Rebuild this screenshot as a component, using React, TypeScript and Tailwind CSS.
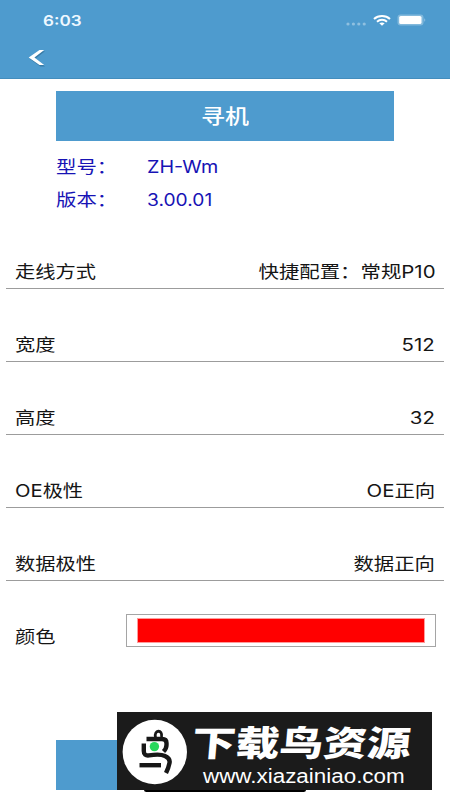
import React from 'react';

const settings = [
  { label: '走线方式', value: '快捷配置：常规P10' },
  { label: '宽度', value: '512' },
  { label: '高度', value: '32' },
  { label: 'OE极性', value: 'OE正向' },
  { label: '数据极性', value: '数据正向' },
];

const StatusBar: React.FC = () => (
  <div className="flex h-10 items-center justify-between pl-[43px] pr-6 text-white">
    <span className="mt-px origin-left scale-x-[1.18] text-[14.5px] font-semibold leading-5 text-[#eef8ff]">6:03</span>
    <div className="flex items-center">
      {/* No signal dots */}
      <svg className="mr-[6px] mt-2" width="21" height="4" viewBox="0 0 21 4" fill="#8fc0e0">
        <circle cx="2" cy="2" r="1.6" />
        <circle cx="7.4" cy="2" r="1.6" />
        <circle cx="12.8" cy="2" r="1.6" />
        <circle cx="18.2" cy="2" r="1.6" />
      </svg>
      <svg className="mr-[6px]" width="18" height="11" viewBox="0 0 18 11" fill="none" stroke="white" strokeWidth="2">
        <path d="M1 4 C5.3 .1 12.7 .1 17 4" />
        <path d="M4 6.7 C6.8 4.2 11.2 4.2 14 6.7" />
        <path d="M6.3 8.3 Q9 6.5 11.7 8.3 L9 10.8Z" fill="white" stroke="none" />
      </svg>
      <svg width="29" height="12" viewBox="0 0 29 12">
        <rect x=".5" y=".5" width="26" height="11" rx="3" fill="#82b9dc" />
        <rect x="2.2" y="2" width="22.3" height="8" rx="1.6" fill="white" />
        <path d="M27.5 4 Q29 6 27.5 8Z" fill="#b4d6ec" />
      </svg>
    </div>
  </div>
);

const Header: React.FC = () => (
  <header className="h-[79px] border-b border-[#438dbd] bg-[#4e9bce]">
    <StatusBar />
    <div className="pl-7 pt-[9px]">
      <svg width="18" height="19" viewBox="0 0 18 19">
        <path d="M12.3 2.3 H17 L7.2 9.8 L17 17.4 H12.3 L1.5 9.8Z" fill="#397ba6" />
        <path d="M11.5 1 H16.2 L6.4 8.5 L16.2 16.1 H11.5 L.7 8.5Z" fill="white" />
      </svg>
    </div>
  </header>
);

const Watermark: React.FC = () => (
  <div className="absolute left-[117px] top-[712px] flex h-[78px] w-[315px] bg-[#1b1b1b] text-white">
    <svg className="ml-[5px] mt-[7px] shrink-0" width="66" height="66" viewBox="0 0 66 66">
      <circle cx="32.8" cy="33" r="32.2" fill="white" />
      <g fill="none" stroke="#171717" strokeWidth="4.4">
        <path d="M33.5 18.5 C31.5 10.5 41 10 39.5 18" strokeWidth="2.8" />
        <path d="M24.5 20 H40 Q44.5 20 44.5 24 V26 Q44.5 29.5 41.5 32.5" />
        <path d="M21.8 24.5 V32 Q21.8 37 27 36.4 Q38 34.5 43 37 Q48.5 39.5 47.5 44 Q46.5 49 44 54" />
        <path d="M17.5 46.2 H39" />
      </g>
      <circle cx="32.4" cy="27.6" r="4.7" fill="#27d75c" />
    </svg>
    <div className="ml-[4px] w-[230px] whitespace-nowrap">
      <div className="mt-[12px] h-[39px] origin-left skew-x-[-4deg] scale-x-[1.25] text-[35px] font-black leading-[39px]">
        下载鸟资源
      </div>
      <div className="ml-[11px] origin-left scale-x-[1.12] font-['Liberation_Sans',sans-serif] text-[20px] leading-[27px]">
        www.xiazainiao.com
      </div>
    </div>
  </div>
);

const App: React.FC = () => {
  return (
    <div className="relative h-[800px] w-[450px] overflow-hidden bg-white font-['Inter','Noto_Sans_CJK_SC',sans-serif] text-[17px] text-[#151515]">
      <Header />

      <main>
        <button className="ml-[56px] mt-[12px] flex h-[50px] w-[338px] items-center justify-center bg-[#4e9bce] text-white">
          <span className="mt-[2px] scale-x-[1.2] text-[20px] font-medium leading-6">寻机</span>
        </button>

        <div className="ml-[56px] mt-[10px] text-[#1713b5]">
          <div className="flex h-[33px] items-center">
            <span className="w-[91px]"><span className="inline-block origin-left scale-x-[1.2]">型号：</span></span>
            <span className="origin-left scale-x-[1.16]">ZH-Wm</span>
          </div>
          <div className="flex h-[33px] items-center">
            <span className="w-[91px]"><span className="inline-block origin-left scale-x-[1.2]">版本：</span></span>
            <span className="origin-left scale-x-[1.13]">3.00.01</span>
          </div>
        </div>

        <div className="mx-[6px] -mt-px">
          {settings.map((item) => (
            <div key={item.label} className="flex h-[73px] items-end justify-between border-b border-[#9c9c9c] pb-[3px] pl-[9px] pr-[9px] leading-[25px]">
              <span className="origin-left scale-x-[1.19]">{item.label}</span>
              <span className="origin-right scale-x-[1.2]">{item.value}</span>
            </div>
          ))}
        </div>

        <div className="mt-[33px] flex h-[34px] justify-between pl-[15px] pr-[14px]">
          <span className="mt-[11px] origin-left scale-x-[1.19] leading-[25px]">颜色</span>
          <div className="h-[33px] w-[310px] border border-[#a5a5a5] px-[10px] py-[3px]">
            <div className="h-[25px] border border-[#ff9b9b] bg-[#ff0000]"></div>
          </div>
        </div>
      </main>

      <div className="ml-[56px] mt-[92px] h-[50px] w-[338px] bg-[#4e9bce]"></div>

      {/* Home indicator */}
      <div className="absolute left-[144px] top-[787px] h-[5px] w-[162px] rounded-full bg-black"></div>
      <Watermark />
    </div>
  );
};

export default App;
